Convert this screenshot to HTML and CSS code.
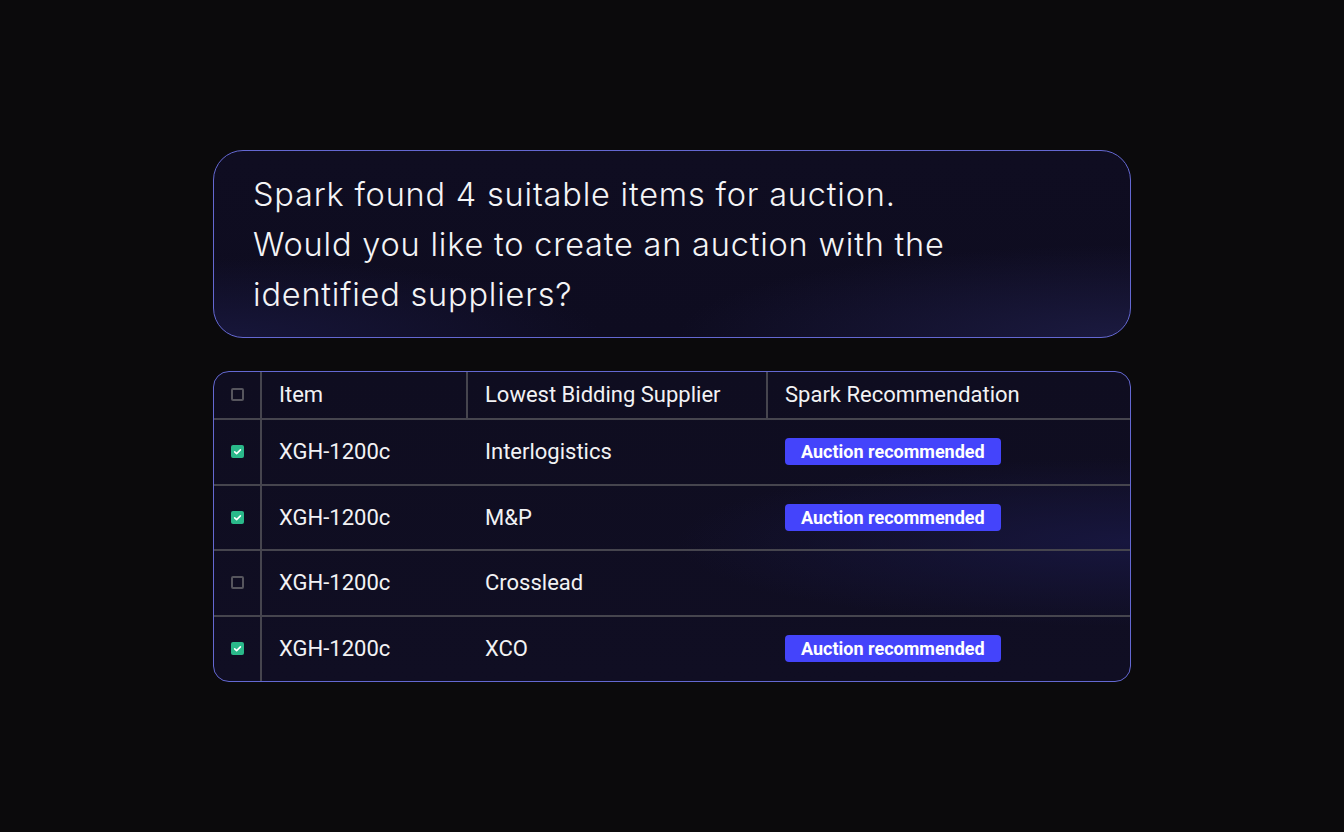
FILE: index.html
```html
<!DOCTYPE html>
<html lang="en">
<head>
<meta charset="utf-8">
<title>Spark auction</title>
<link rel="stylesheet" href="styles.css">
</head>
<body>
<main class="stage">
  <section class="message">
    <p>Spark found 4 suitable items for auction.<br>Would you like to create an auction with the<br>identified suppliers?</p>
  </section>
  <section class="table">
    <div class="row head">
      <div class="cell check"><span class="box"></span></div>
      <div class="cell item">Item</div>
      <div class="cell supplier">Lowest Bidding Supplier</div>
      <div class="cell rec">Spark Recommendation</div>
    </div>
    <div class="row">
      <div class="cell check"><span class="box on"><svg viewBox="0 0 12 12"><path d="M3.4 6.3 5.2 8 8.7 4.5"/></svg></span></div>
      <div class="cell item">XGH-1200c</div>
      <div class="cell supplier">Interlogistics</div>
      <div class="cell rec"><span class="badge">Auction recommended</span></div>
    </div>
    <div class="row">
      <div class="cell check"><span class="box on"><svg viewBox="0 0 12 12"><path d="M3.4 6.3 5.2 8 8.7 4.5"/></svg></span></div>
      <div class="cell item">XGH-1200c</div>
      <div class="cell supplier">M&amp;P</div>
      <div class="cell rec"><span class="badge">Auction recommended</span></div>
    </div>
    <div class="row">
      <div class="cell check"><span class="box"></span></div>
      <div class="cell item">XGH-1200c</div>
      <div class="cell supplier">Crosslead</div>
      <div class="cell rec"></div>
    </div>
    <div class="row last">
      <div class="cell check"><span class="box on"><svg viewBox="0 0 12 12"><path d="M3.4 6.3 5.2 8 8.7 4.5"/></svg></span></div>
      <div class="cell item">XGH-1200c</div>
      <div class="cell supplier">XCO</div>
      <div class="cell rec"><span class="badge">Auction recommended</span></div>
    </div>
  </section>
</main>
</body>
</html>
```
FILE: styles.css
```css
html, body {
  margin: 0;
  padding: 0;
}
body {
  width: 1344px;
  height: 832px;
  overflow: hidden;
  background: #0b0a0c;
  color: #f4f4f6;
  font-family: "Inter", "Liberation Sans", sans-serif;
}
.stage {
  display: flex;
  flex-direction: column;
  padding: 150px 0 0 213px;
  gap: 33px;
}
.message {
  box-sizing: border-box;
  width: 918px;
  height: 188px;
  border: 1.5px solid #6468d2;
  border-radius: 30px;
  background: radial-gradient(ellipse at 100% 100%, #1b1a40 0%, rgba(27,26,64,0) 35%),
              radial-gradient(ellipse at 0% 100%, #17163a 0%, rgba(23,22,58,0) 30%),
              linear-gradient(180deg, #0f0d21 0%, #0e0c20 100%);
  padding: 19px 0 0 39px;
}
.message p {
  margin: 0;
  font-size: 32.5px;
  line-height: 50px;
  letter-spacing: 0.8px;
  font-weight: 300;
}
.table {
  box-sizing: border-box;
  width: 918px;
  height: 311px;
  border: 1.5px solid #6468d2;
  border-radius: 16px;
  background: radial-gradient(ellipse at 100% 55%, #17163e 0%, rgba(23,22,62,0) 35%),
              linear-gradient(180deg, #0f0d20 0%, #100e23 100%);
  overflow: hidden;
  font-family: "Roboto", "Liberation Sans", sans-serif;
  font-size: 22px;
  color: #f2f2f4;
  display: grid;
  grid-template-rows: 47.5px 66px 65.5px 65.5px 1fr;
}
.row {
  display: grid;
  grid-template-columns: 48px 206px 300px 1fr;
  border-bottom: 2px solid #46454e;
  box-sizing: border-box;
}
.row.last {
  border-bottom: none;
}
.cell {
  display: flex;
  align-items: center;
  padding-left: 17px;
}
.cell.check {
  padding-left: 0;
  justify-content: center;
  border-right: 2px solid #46454e;
}
.head .item, .head .supplier {
  border-right: 2px solid #46454e;
}
.box {
  width: 13px;
  height: 13px;
  box-sizing: border-box;
  border: 2px solid #56555d;
  border-radius: 2px;
  display: flex;
  margin-left: 1px;
}
.box.on {
  border: none;
  background: #2ab98a;
}
.box svg {
  width: 13px;
  height: 13px;
}
.box path {
  fill: none;
  stroke: #ffffff;
  stroke-width: 1.5;
  stroke-linecap: round;
  stroke-linejoin: round;
}
.badge {
  background: #4444fb;
  color: #fff;
  font-weight: 700;
  font-size: 18px;
  border-radius: 4px;
  height: 27px;
  padding: 0 16px;
  display: inline-flex;
  align-items: center;
}
```
